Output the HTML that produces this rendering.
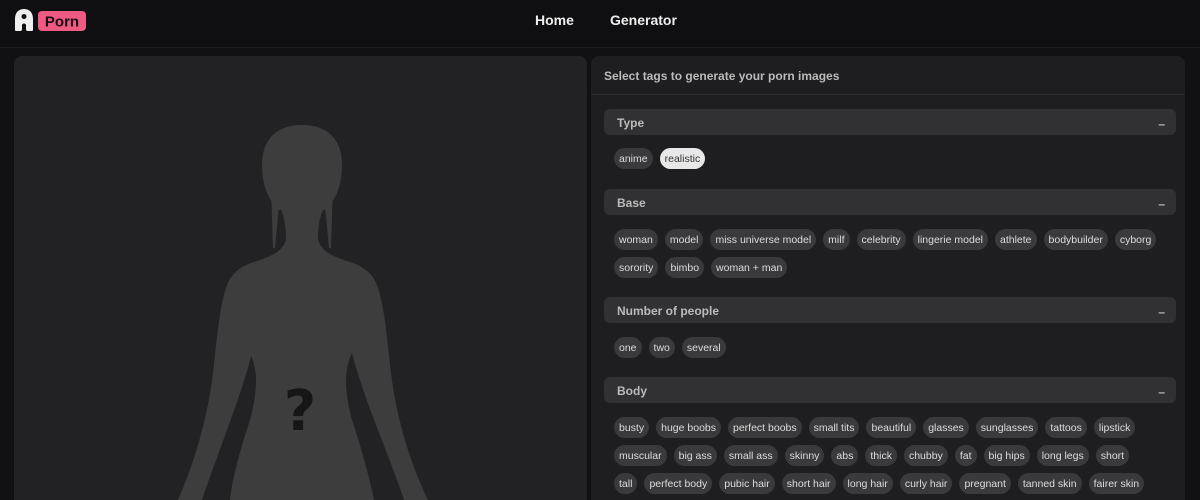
<!DOCTYPE html>
<html style="width:1200px;height:500px;overflow:hidden"><head><meta charset="utf-8">
<style>
*{margin:0;padding:0;box-sizing:border-box}
body{width:1200px;height:500px;overflow:hidden;background:#111113;font-family:"Liberation Sans",Arial,sans-serif;position:relative}
.hdr{position:absolute;left:0;top:0;width:1200px;height:48px;background:#0f0f11;border-bottom:1px solid #1c1c1e}
.nav{position:absolute;top:12px;color:#eee;font-weight:bold;font-size:14px}
.left{position:absolute;left:14px;top:56px;width:573px;height:444px;background:#222224;border-radius:8px 8px 0 0;overflow:hidden}
.right{position:absolute;left:591px;top:56px;width:594px;height:444px;background:#1e1e20;border-radius:8px 8px 0 0;overflow:hidden}
.title{height:39px;border-bottom:1px solid #2c2c2e;color:#bbb;font-size:12px;font-weight:bold;padding:13px 0 0 13px}
.sec{position:absolute;left:13px;width:572px;height:26px;background:#313133;border-radius:6px;color:#bbb;font-size:12px;font-weight:bold;padding:7px 0 0 13px}
.sec span{position:absolute;right:11px;top:8px;font-size:12px}
.row{position:absolute;left:23px;display:flex;gap:7px}
.c{height:21px;line-height:22px;padding:0 5px;background:#3a3a3c;border-radius:11px;color:#ddd;font-size:10.5px;white-space:nowrap}
.c.on{background:#e8e8e8;color:#333}
</style></head><body>
<div class="hdr">
<svg style="position:absolute;left:14px;top:8px" width="74" height="24" viewBox="0 0 74 24">
<path d="M1,22 L1,11 C1,4 5,1 10,1 C15,1 19,4 19,11 L19,22 C19,23 18,23 17,23 L14,23 C12,23 12,22 12,20 L12,17 C12,15 8,15 8,17 L8,20 C8,22 8,23 6,23 L3,23 C2,23 1,23 1,22Z M10,6 a2.5,2.5 0 1 0 0.01,0Z" fill="#eee" fill-rule="evenodd"/>
<rect x="24" y="3" width="48" height="20" rx="4" fill="#ef5a83"/>
<text x="48" y="18.5" text-anchor="middle" font-family="Liberation Sans" font-weight="bold" font-size="15" fill="#1a0d12">Porn</text>
</svg>
<div class="nav" style="left:535px">Home</div>
<div class="nav" style="left:610px">Generator</div>
</div>
<div class="left"></div>
<svg style="position:absolute;left:0;top:0" width="1200" height="500" viewBox="0 0 1200 500">
<g fill="#3d3d3e">
<path d="M262,165 C262,138 278,125 302,125 C326,125 342,138 342,165 C342,185 336,200 325,210 L279,210 C268,200 262,185 262,165Z"/>
<path d="M271,185 L273,248 L275,248 L279,205Z M333,185 L331,248 L329,248 L325,205Z"/>
<path d="M279,205 L325,205 C320,215 318,225 318,240 C322,252 332,256 350,262 C362,266 372,272 377,285 C381,300 383,320 384,340 L352,353 C344,370 344,390 352,420 C362,450 370,480 374,500 L230,500 C232,480 240,450 250,420 C258,390 258,370 250,353 L220,340 C221,320 223,300 227,285 C232,272 242,266 254,262 C272,256 282,252 286,240 C286,225 284,215 279,205Z"/>
<path d="M227,285 C220,305 218,330 215,355 C211,400 200,450 178,500 L202,500 C215,460 240,400 252,353 L222,340Z"/>
<path d="M377,285 C384,305 386,330 389,355 C393,400 404,450 428,500 L404,500 C391,460 364,400 352,353 L382,340Z"/>
</g>
<text x="300" y="430" text-anchor="middle" font-family="DejaVu Sans" font-weight="bold" font-size="56" fill="#161616">?</text>
</svg>
<div class="right">
<div class="title">Select tags to generate your porn images</div>
<div class="sec" style="top:53px">Type<span>–</span></div>
<div class="row" style="top:92px"><div class="c">anime</div><div class="c on">realistic</div></div>
<div class="sec" style="top:133px">Base<span>–</span></div>
<div class="row" style="top:173px"><div class="c">woman</div><div class="c">model</div><div class="c">miss universe model</div><div class="c">milf</div><div class="c">celebrity</div><div class="c">lingerie model</div><div class="c">athlete</div><div class="c">bodybuilder</div><div class="c">cyborg</div></div>
<div class="row" style="top:201px"><div class="c">sorority</div><div class="c">bimbo</div><div class="c">woman + man</div></div>
<div class="sec" style="top:241px">Number of people<span>–</span></div>
<div class="row" style="top:281px"><div class="c">one</div><div class="c">two</div><div class="c">several</div></div>
<div class="sec" style="top:321px">Body<span>–</span></div>
<div class="row" style="top:361px"><div class="c">busty</div><div class="c">huge boobs</div><div class="c">perfect boobs</div><div class="c">small tits</div><div class="c">beautiful</div><div class="c">glasses</div><div class="c">sunglasses</div><div class="c">tattoos</div><div class="c">lipstick</div></div>
<div class="row" style="top:389px"><div class="c">muscular</div><div class="c">big ass</div><div class="c">small ass</div><div class="c">skinny</div><div class="c">abs</div><div class="c">thick</div><div class="c">chubby</div><div class="c">fat</div><div class="c">big hips</div><div class="c">long legs</div><div class="c">short</div></div>
<div class="row" style="top:417px"><div class="c">tall</div><div class="c">perfect body</div><div class="c">pubic hair</div><div class="c">short hair</div><div class="c">long hair</div><div class="c">curly hair</div><div class="c">pregnant</div><div class="c">tanned skin</div><div class="c">fairer skin</div></div>
<div class="row" style="top:445px"><div class="c">dark skin</div><div class="c">oiled body</div></div>
</div>
</body></html>
